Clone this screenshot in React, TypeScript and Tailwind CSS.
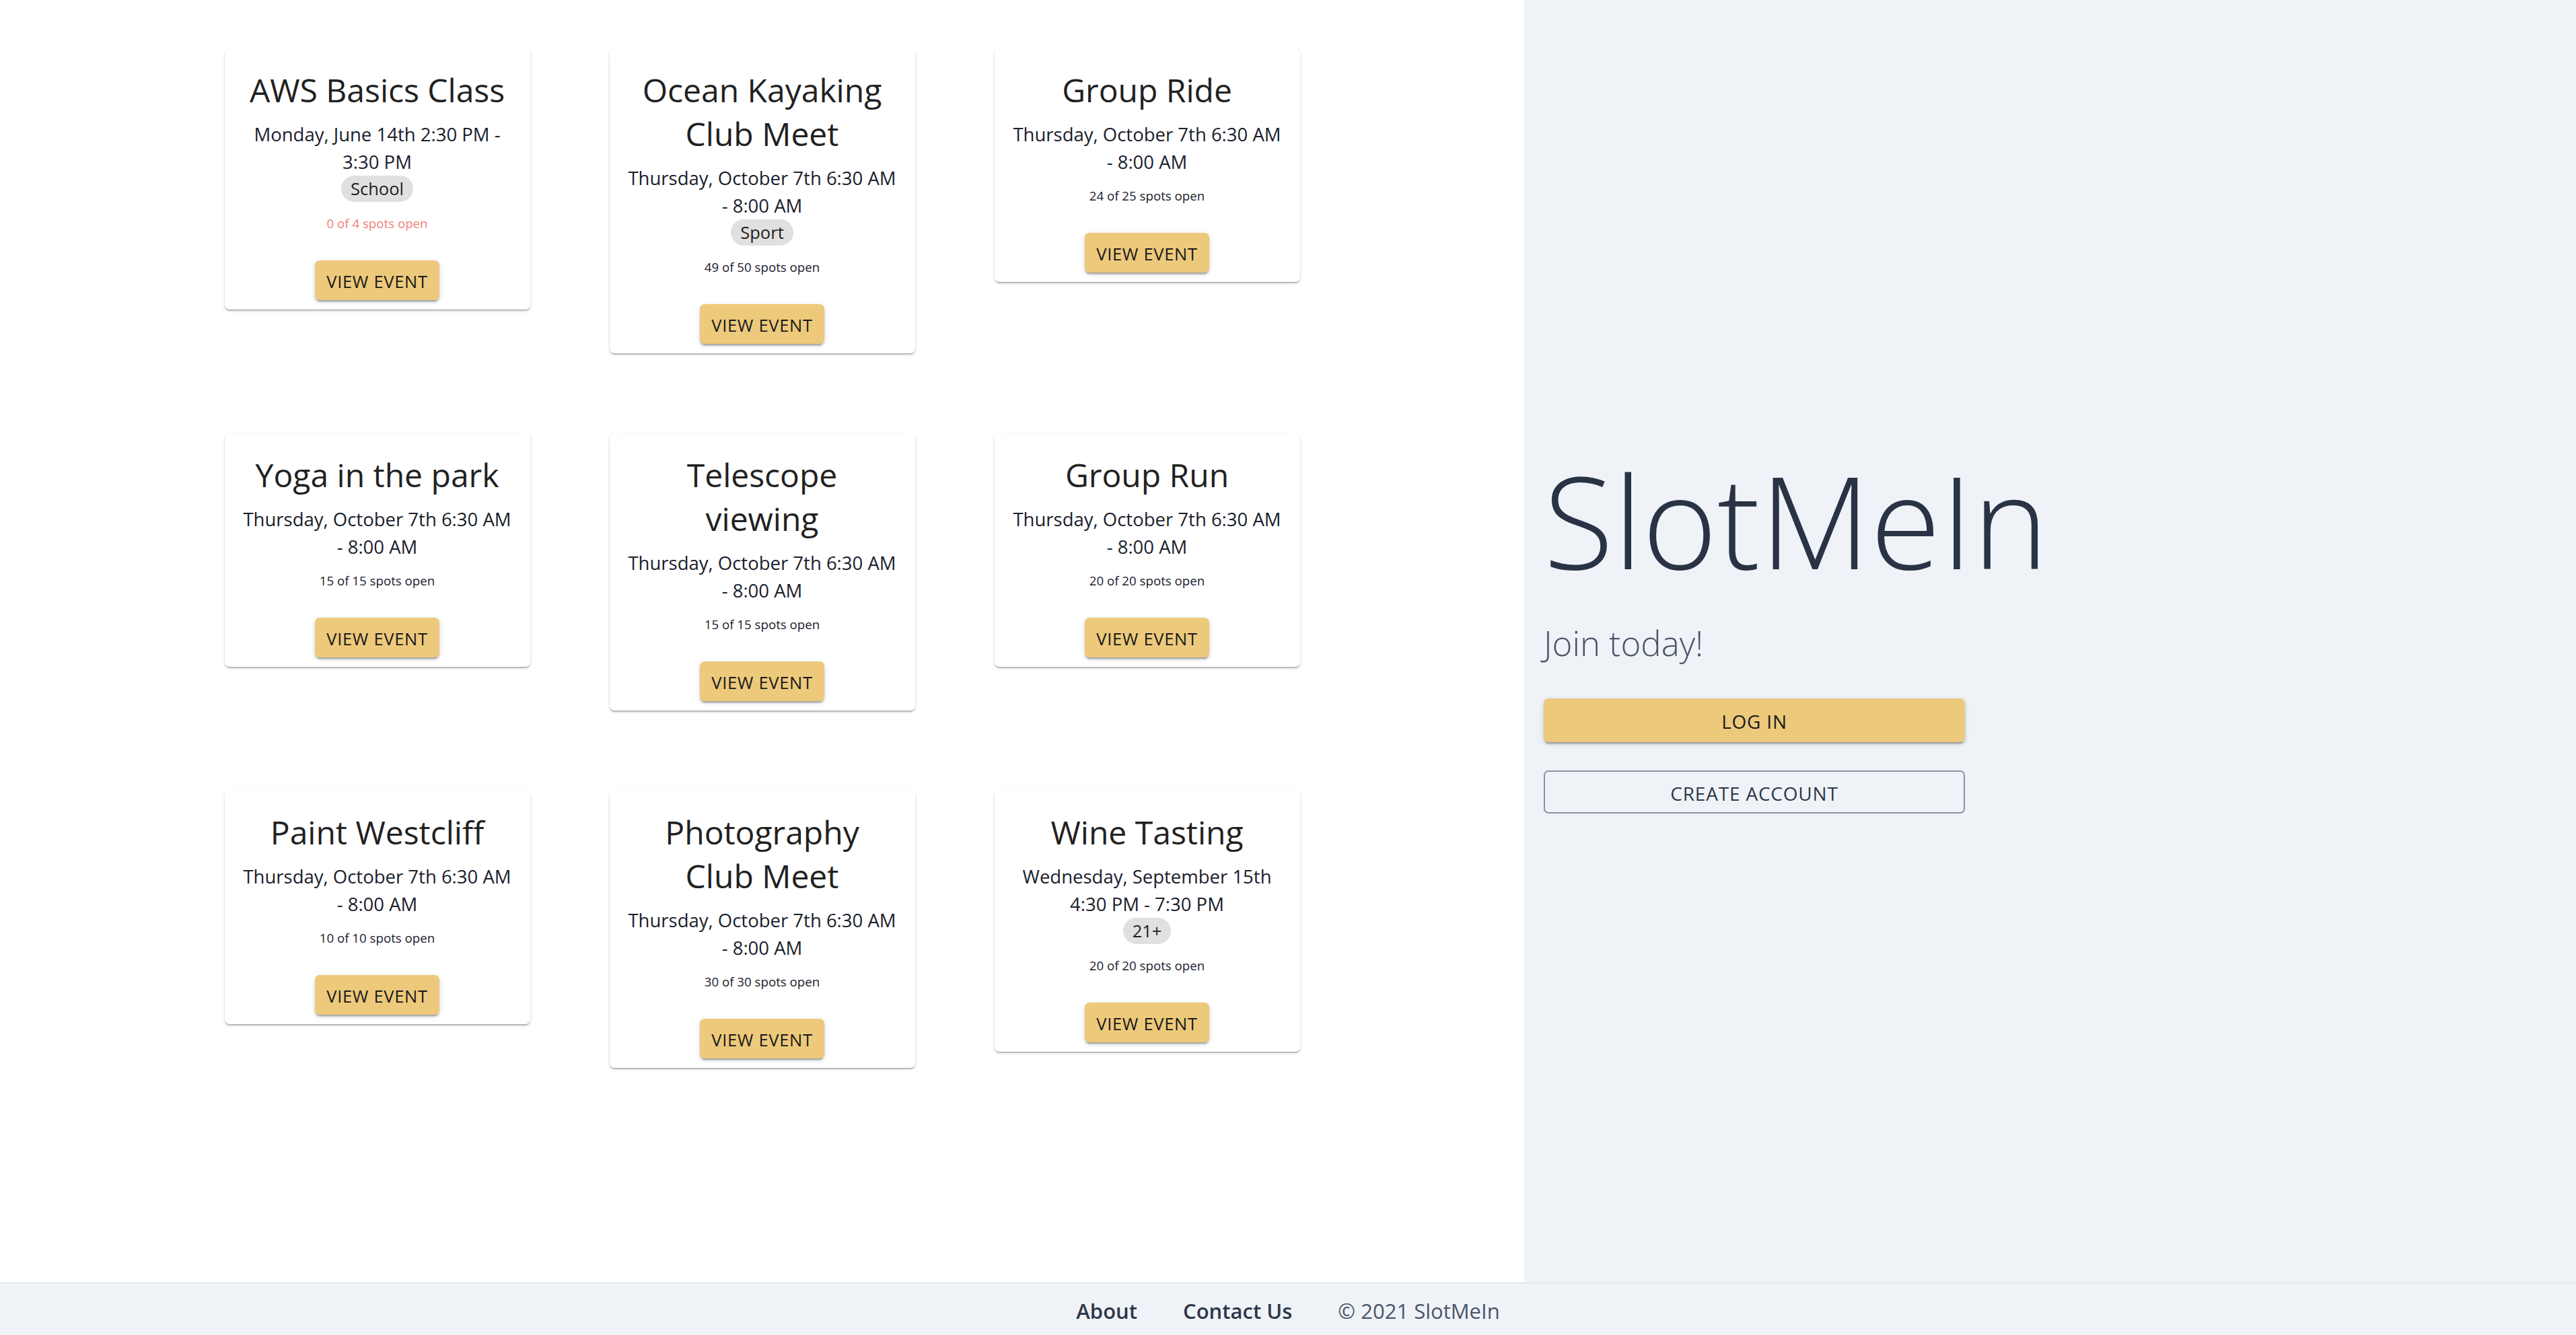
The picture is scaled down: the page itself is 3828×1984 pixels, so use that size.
import React from "react";

type Ev = {
  title: string[];
  date: string[];
  chip?: string;
  spots: string;
  full?: boolean;
};

const THU = ["Thursday, October 7th 6:30 AM", "- 8:00 AM"];

const events: Ev[] = [
  { title: ["AWS Basics Class"], date: ["Monday, June 14th 2:30 PM -", "3:30 PM"], chip: "School", spots: "0 of 4 spots open", full: true },
  { title: ["Ocean Kayaking", "Club Meet"], date: THU, chip: "Sport", spots: "49 of 50 spots open" },
  { title: ["Group Ride"], date: THU, spots: "24 of 25 spots open" },
  { title: ["Yoga in the park"], date: THU, spots: "15 of 15 spots open" },
  { title: ["Telescope", "viewing"], date: THU, spots: "15 of 15 spots open" },
  { title: ["Group Run"], date: THU, spots: "20 of 20 spots open" },
  { title: ["Paint Westcliff"], date: THU, spots: "10 of 10 spots open" },
  { title: ["Photography", "Club Meet"], date: THU, spots: "30 of 30 spots open" },
  { title: ["Wine Tasting"], date: ["Wednesday, September 15th", "4:30 PM - 7:30 PM"], chip: "21+", spots: "20 of 20 spots open" },
];

function Lines({ lines }: { lines: string[] }) {
  return (
    <>
      {lines.map((l, i) => (
        <React.Fragment key={i}>
          {i > 0 && <br />}
          {l}
        </React.Fragment>
      ))}
    </>
  );
}

function Card({ ev }: { ev: Ev }) {
  return (
    <div className="w-[454px] bg-white rounded-[7px] shadow-[0px_3px_2px_-2px_rgba(0,0,0,0.2),0px_2px_2px_0px_rgba(0,0,0,0.14),0px_2px_5px_0px_rgba(0,0,0,0.12)] flex flex-col">
      <div className="pt-[29px] px-[20px] pb-[28px] flex flex-col items-center text-center">
        <div className="text-[48px] leading-[65px] text-[#212121] whitespace-nowrap">
          <Lines lines={ev.title} />
        </div>
        <div className="mt-[13px] text-[27.5px] leading-[41px] text-[#1a202c] whitespace-nowrap">
          <Lines lines={ev.date} />
        </div>
        {ev.chip && (
          <div className="mb-[2px] inline-flex h-[39px] items-center rounded-full bg-[#e0e0e0] px-[14px] text-[25.5px] leading-[39px] text-[#212121]">
            {ev.chip}
          </div>
        )}
        <div
          className={
            "mt-[17px] text-[18.7px] leading-[26px] whitespace-nowrap " +
            (ev.full ? "text-[#ef8176]" : "text-[#1a202c]")
          }
        >
          {ev.spots}
        </div>
      </div>
      <div className="p-[14px] flex justify-center">
        <button className="h-[59px] px-[17px] pt-[3px] rounded-[7px] bg-[#edc97b] text-[25.5px] font-medium tracking-[0.7px] text-[#1a1a1a] flex items-center justify-center shadow-[0px_5px_2px_-3px_rgba(0,0,0,0.2),0px_3px_3px_0px_rgba(0,0,0,0.14),0px_2px_8px_0px_rgba(0,0,0,0.12)]">
          VIEW EVENT
        </button>
      </div>
    </div>
  );
}

export default function App() {
  return (
    <div className="h-screen flex flex-col font-['Open_Sans',sans-serif] overflow-hidden">
      <div className="flex flex-1 min-h-0">
        <div className="w-[2265px] shrink-0 bg-white pt-[72px] flex justify-center">
          <div className="grid grid-cols-[repeat(3,454px)] gap-x-[118px] gap-y-[119px] items-start content-start">
            {events.map((ev, i) => (
              <Card key={i} ev={ev} />
            ))}
          </div>
        </div>
        <div className="flex-1 bg-[#eff3f8] flex flex-col justify-center pl-[29px] pb-[18px]">
          <div className="text-[190px] leading-[188px] font-light text-[#2a3345] whitespace-nowrap">
            SlotMeIn
          </div>
          <div className="mt-[58px] text-[51px] leading-[60px] font-light text-[#4a5568]">
            Join today!
          </div>
          <button className="mt-[53px] w-[626px] h-[65px] pt-[3px] rounded-[7px] bg-[#edc97b] text-[28px] font-medium tracking-[0.8px] text-[#1a1a1a] flex items-center justify-center shadow-[0px_5px_2px_-3px_rgba(0,0,0,0.2),0px_3px_3px_0px_rgba(0,0,0,0.14),0px_2px_8px_0px_rgba(0,0,0,0.12)]">
            LOG IN
          </button>
          <button className="mt-[42px] w-[626px] h-[64px] pt-[3px] rounded-[7px] border-2 border-[#8c93a0] text-[28px] font-medium tracking-[0.8px] text-[#2d3748] flex items-center justify-center">
            CREATE ACCOUNT
          </button>
        </div>
      </div>
      <footer className="h-[78px] shrink-0 border-t border-[#d8dbe0] bg-[#eff3f8] flex items-center justify-center gap-[68px] pt-[5px] text-[31px]">
        <span className="font-semibold text-[#2d3748]">About</span>
        <span className="font-semibold text-[#2d3748]">Contact Us</span>
        <span className="text-[#4a5568]">© 2021 SlotMeIn</span>
      </footer>
    </div>
  );
}
